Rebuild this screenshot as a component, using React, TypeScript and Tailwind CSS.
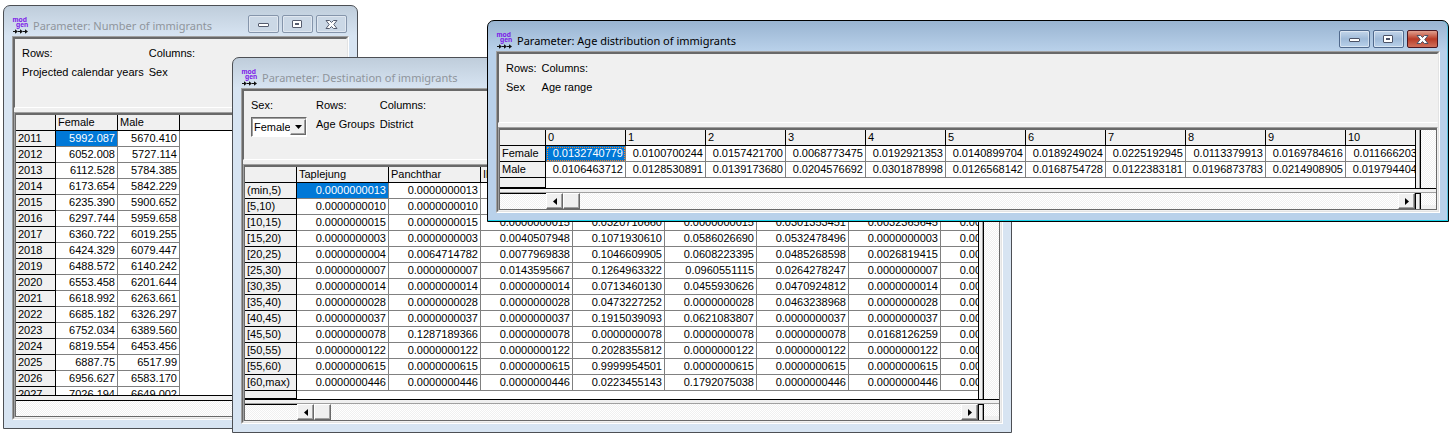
import React from "react";
import clsx from "clsx";

const DITHER =
  "bg-[repeating-conic-gradient(#ffffff_0_25%,#f0f0f0_0_50%)] bg-[length:2px_2px]";

type GridData = {
  label: string;
  columns: string[];
  rows: { name: string; values: string[] }[];
  headWidth: string;
  colWidth: string;
  tableWidth: string;
  focused?: boolean;
};

const immigrants: GridData = {
  label: "Number of immigrants",
  columns: ["Female", "Male"],
  headWidth: "w-[40px]",
  colWidth: "w-[62px]",
  tableWidth: "w-full",
  rows: [
    { name: "2011", values: ["5992.087", "5670.410"] },
    { name: "2012", values: ["6052.008", "5727.114"] },
    { name: "2013", values: ["6112.528", "5784.385"] },
    { name: "2014", values: ["6173.654", "5842.229"] },
    { name: "2015", values: ["6235.390", "5900.652"] },
    { name: "2016", values: ["6297.744", "5959.658"] },
    { name: "2017", values: ["6360.722", "6019.255"] },
    { name: "2018", values: ["6424.329", "6079.447"] },
    { name: "2019", values: ["6488.572", "6140.242"] },
    { name: "2020", values: ["6553.458", "6201.644"] },
    { name: "2021", values: ["6618.992", "6263.661"] },
    { name: "2022", values: ["6685.182", "6326.297"] },
    { name: "2023", values: ["6752.034", "6389.560"] },
    { name: "2024", values: ["6819.554", "6453.456"] },
    { name: "2025", values: ["6887.75", "6517.99"] },
    { name: "2026", values: ["6956.627", "6583.170"] },
    { name: "2027", values: ["7026.194", "6649.002"] },
  ],
};

const destination: GridData = {
  label: "Destination of immigrants",
  columns: ["Taplejung", "Panchthar", "Ilam", "Jhapa", "Morang", "Sunsari", "Dhankuta", "Terhathum"],
  headWidth: "w-[52px]",
  colWidth: "w-[92px]",
  tableWidth: "w-[788px]",
  rows: [
    { name: "(min,5)", values: ["0.0000000013", "0.0000000013", "0.0000000013", "0.0000000013", "0.0000000013", "0.0000000013", "0.0000000013", "0.0000000013"] },
    { name: "[5,10)", values: ["0.0000000010", "0.0000000010", "0.0000000010", "0.0000000010", "0.0000000010", "0.0000000010", "0.0000000010", "0.0000000010"] },
    { name: "[10,15)", values: ["0.0000000015", "0.0000000015", "0.0000000015", "0.0320710660", "0.0000000015", "0.0301353451", "0.0032365645", "0.0000000015"] },
    { name: "[15,20)", values: ["0.0000000003", "0.0000000003", "0.0040507948", "0.1071930610", "0.0586026690", "0.0532478496", "0.0000000003", "0.0000000003"] },
    { name: "[20,25)", values: ["0.0000000004", "0.0064714782", "0.0077969838", "0.1046609905", "0.0608223395", "0.0485268598", "0.0026819415", "0.0000000004"] },
    { name: "[25,30)", values: ["0.0000000007", "0.0000000007", "0.0143595667", "0.1264963322", "0.0960551115", "0.0264278247", "0.0000000007", "0.0000000007"] },
    { name: "[30,35)", values: ["0.0000000014", "0.0000000014", "0.0000000014", "0.0713460130", "0.0455930626", "0.0470924812", "0.0000000014", "0.0000000014"] },
    { name: "[35,40)", values: ["0.0000000028", "0.0000000028", "0.0000000028", "0.0473227252", "0.0000000028", "0.0463238968", "0.0000000028", "0.0000000028"] },
    { name: "[40,45)", values: ["0.0000000037", "0.0000000037", "0.0000000037", "0.1915039093", "0.0621083807", "0.0000000037", "0.0000000037", "0.0000000037"] },
    { name: "[45,50)", values: ["0.0000000078", "0.1287189366", "0.0000000078", "0.0000000078", "0.0000000078", "0.0000000078", "0.0168126259", "0.0000000078"] },
    { name: "[50,55)", values: ["0.0000000122", "0.0000000122", "0.0000000122", "0.2028355812", "0.0000000122", "0.0000000122", "0.0000000122", "0.0000000122"] },
    { name: "[55,60)", values: ["0.0000000615", "0.0000000615", "0.0000000615", "0.9999954501", "0.0000000615", "0.0000000615", "0.0000000615", "0.0000000615"] },
    { name: "[60,max)", values: ["0.0000000446", "0.0000000446", "0.0000000446", "0.0223455143", "0.1792075038", "0.0000000446", "0.0000000446", "0.0000000446"] },
  ],
};

const ageDistribution: GridData = {
  label: "Age distribution of immigrants",
  columns: ["0", "1", "2", "3", "4", "5", "6", "7", "8", "9", "10"],
  headWidth: "w-[46px]",
  colWidth: "w-[80px]",
  tableWidth: "w-[926px]",
  focused: true,
  rows: [
    { name: "Female", values: ["0.0132740779", "0.0100700244", "0.0157421700", "0.0068773475", "0.0192921353", "0.0140899704", "0.0189249024", "0.0225192945", "0.0113379913", "0.0169784616", "0.0116662031"] },
    { name: "Male", values: ["0.0106463712", "0.0128530891", "0.0139173680", "0.0204576692", "0.0301878998", "0.0126568142", "0.0168754728", "0.0122383181", "0.0196873783", "0.0214908905", "0.0197944041"] },
  ],
};

function ModgenIcon() {
  return (
    <svg width="18" height="18" viewBox="0 0 18 18" aria-hidden="true" className="shrink-0">
      <g fill="#7a12e8" fontFamily="Liberation Sans, sans-serif" fontWeight="700" fontSize="6.800">
        <text x="0.500" y="5">mod</text>
        <text x="4" y="10">gen</text>
      </g>
      <g stroke="#111" fill="#111" strokeWidth="1">
        <path d="M1 14.500h3" />
        <path d="M6 14.500h3" />
        <path d="M11 14.500h3" />
        <path stroke="none" d="M3 12.300l3 2.200-3 2.200zM8 12.300l3 2.200-3 2.200zM13 12.300l3 2.200-3 2.200z" />
      </g>
    </svg>
  );
}

function CaptionButton({ kind, active }: { kind: "Minimize" | "Maximize" | "Close"; active: boolean }) {
  const red = active && kind === "Close";
  const stroke = active ? "#4b5266" : "#555c6e";
  return (
    <button
      type="button"
      aria-label={kind}
      className={clsx(
        "flex h-[18px] w-[31px] items-center justify-center rounded-[2px] border",
        red
          ? "border-[#4a1620] bg-linear-to-b from-[#e0a090] from-0% via-[#b83a26] via-50% to-[#d0705c]"
          : active
            ? "border-[#50698c] bg-linear-to-b from-[#c4d6ea] via-[#9fbad8] via-50% to-[#b9d1ea] shadow-[inset_0_0_0_1px_rgba(255,255,255,0.45)]"
            : "border-[#8595ab] bg-[#cbd8e6] shadow-[inset_0_0_0_1px_rgba(255,255,255,0.4)]",
      )}
    >
      <svg width="13" height="11" viewBox="0 0 13 11" fill="#fff" stroke={stroke}>
        {kind === "Minimize" && <rect x="1.500" y="4.500" width="10" height="3" rx="0.500" />}
        {kind === "Maximize" && (
          <>
            <rect x="1.500" y="1.500" width="9" height="7" rx="0.500" />
            <rect x="4.500" y="4.500" width="3" height="1" fill="#9fb6d2" />
          </>
        )}
        {kind === "Close" && (
          <path d="M1 1.500h3.500l2 2 2-2H12L8.800 5.500 12 9.500H8.500l-2-2-2 2H1l3.200-4z" />
        )}
      </svg>
    </button>
  );
}

function Window({
  title,
  className,
  active = false,
  panel,
  children,
}: {
  title: string;
  className: string;
  active?: boolean;
  panel: React.ReactNode;
  children: React.ReactNode;
}) {
  return (
    <section
      aria-label={title}
      className={clsx(
        "absolute flex flex-col rounded-t-[7px] border px-2 pb-2",
        active
          ? "border-black bg-[linear-gradient(#99b4d1,#b9d1ea_30px)] shadow-[inset_0_-1px_0_#19d3ea,inset_-1px_0_0_#5cc4e0]"
          : "border-[#4c4f54] bg-[linear-gradient(#bfcddb,#d7e4f2_30px)]",
        className,
      )}
    >
      <header className="flex h-[30px] shrink-0 items-center pt-[9px] pr-[2px]">
        <ModgenIcon />
        <h2
          className={clsx(
            "ml-[3px] flex-1 truncate font-['Noto_Sans','Open_Sans',sans-serif] text-[11px] leading-4",
            active ? "text-black" : "text-[#8f959c]",
          )}
        >
          {title}
        </h2>
        <div className="flex gap-[3px] self-start">
          <CaptionButton kind="Minimize" active={active} />
          <CaptionButton kind="Maximize" active={active} />
          <CaptionButton kind="Close" active={active} />
        </div>
      </header>
      <div className="flex min-h-0 flex-1 flex-col border border-[#a0a0a0] border-r-white border-b-white">
        <div className="flex min-h-0 flex-1 flex-col border border-[#696969] border-r-[#e3e3e3] border-b-[#e3e3e3] bg-[#f0f0f0]">
          <div className="flex h-[70px] shrink-0 items-start border border-t-[#696969] border-r-[#f0f0f0] border-b-white border-l-[#696969] pt-[5px] pl-[7px]">
            {panel}
          </div>
          <div className="mt-1 flex min-h-0 flex-1 flex-col border border-t-[#a0a0a0] border-r-[#f0f0f0] border-b-[#f0f0f0] border-l-[#a0a0a0]">
            <div className="flex min-h-0 flex-1 flex-col border border-t-2 border-[#696969]">{children}</div>
          </div>
        </div>
      </div>
    </section>
  );
}

function Field({ label, value }: { label: string; value: string }) {
  return (
    <dl className="mr-[5px] leading-[19px]">
      <dt>{label}</dt>
      <dd>{value}</dd>
    </dl>
  );
}

function Grid({ data }: { data: GridData }) {
  const filler = data.tableWidth === "w-full";
  return (
    <div className="flex min-h-0 min-w-0 flex-1 flex-col overflow-hidden border-b border-black bg-white">
      <table
        aria-label={data.label}
        className={clsx("shrink-0 table-fixed border-separate border-spacing-0 leading-[15px]", data.tableWidth)}
      >
        <colgroup>
          <col className={data.headWidth} />
          {data.columns.map((c) => (
            <col key={c} className={data.colWidth} />
          ))}
          {filler && <col />}
        </colgroup>
        <thead>
          <tr className="bg-[#f0f0f0] text-left">
            <td className="h-4 border-r border-b border-black p-0" />
            {data.columns.map((c) => (
              <th key={c} scope="col" className="h-4 overflow-hidden border-r border-b border-black p-0 pl-[2px] font-normal">
                {c}
              </th>
            ))}
            {filler && <td className="h-4 border-b border-black p-0" />}
          </tr>
        </thead>
        <tbody>
          {data.rows.map((row, r) => (
            <tr key={row.name}>
              <th scope="row" className="h-4 border-r border-b border-black bg-[#f0f0f0] p-0 pl-[2px] text-left font-normal">
                {row.name}
              </th>
              {row.values.map((v, c) => (
                <td
                  key={c}
                  className={clsx(
                    "h-4 border-r border-b border-[#808080] p-0 pr-[2px] text-right",
                    r === 0 && c === 0 && "bg-[#0078d7] text-white",
                    r === 0 && c === 0 && data.focused && "outline-1 -outline-offset-2 outline-dotted outline-[#ff8728]",
                  )}
                >
                  {v}
                </td>
              ))}
              {filler && <td className="p-0" />}
            </tr>
          ))}
        </tbody>
      </table>
      <div className={clsx("min-h-0 flex-1 border-r border-b border-black bg-[#f0f0f0]", data.headWidth)} />
    </div>
  );
}

function ScrollButton({ direction }: { direction?: "left" | "right" }) {
  return (
    <button
      type="button"
      aria-label={direction ? `Scroll ${direction}` : "Scroll position"}
      className="flex h-4 w-[17px] shrink-0 items-center justify-center border border-t-white border-r-[#696969] border-b-[#696969] border-l-white bg-[#f0f0f0] shadow-[inset_-1px_-1px_0_#a0a0a0]"
    >
      {direction && (
        <svg width="4" height="7" viewBox="0 0 4 7" fill="#000">
          <path d={direction === "left" ? "M4 0v7L0 3.500z" : "M0 0v7l4-3.500z"} />
        </svg>
      )}
    </button>
  );
}

function Splitter({ className }: { className?: string }) {
  return (
    <div className={clsx("w-[6px] shrink-0 border-x border-black bg-[#f0f0f0] shadow-[inset_-1px_0_0_#a0a0a0]", className)} />
  );
}

function ScrollGrid({ data }: { data: GridData }) {
  return (
    <>
      <div className="flex min-h-0 flex-1">
        <Grid data={data} />
        <Splitter className="border-b" />
        <div className={clsx("w-[15px] shrink-0 border-b border-black", DITHER)} />
      </div>
      <div className="h-1 shrink-0 border-b border-[#a0a0a0] bg-[#f0f0f0]" />
      <div className="flex h-4 shrink-0">
        <div className={clsx("shrink-0 border-t border-black", data.headWidth, DITHER)} />
        <div className={clsx("flex min-w-0 flex-1", DITHER)}>
          <ScrollButton direction="left" />
          <ScrollButton />
          <div className="flex-1" />
          <ScrollButton direction="right" />
        </div>
        <Splitter className="border-t" />
        <div className={clsx("w-[15px] shrink-0 border-b-4 border-[#f0f0f0]", DITHER)} />
      </div>
    </>
  );
}

export default function App() {
  return (
    <main className="relative min-h-screen overflow-hidden bg-white font-['Liberation_Sans',Arial,sans-serif] text-[11px] text-black">
      <Window
        title="Parameter: Number of immigrants"
        className="top-[5px] left-[3px] h-[424px] w-[355px]"
        panel={
          <>
            <Field label="Rows:" value="Projected calendar years" />
            <Field label="Columns:" value="Sex" />
          </>
        }
      >
        <div className="flex min-h-0 flex-1">
          <Grid data={immigrants} />
        </div>
        <div className="h-1 shrink-0 bg-[#f0f0f0]" />
        <div className={clsx("h-4 shrink-0 border-t border-black", DITHER)} />
      </Window>

      <Window
        title="Parameter: Destination of immigrants"
        className="top-[57px] left-[232px] h-[376px] w-[780px]"
        panel={
          <>
            <div className="mr-[9px] flex flex-col">
              <label htmlFor="sex" className="leading-[19px]">
                Sex:
              </label>
              <div className="relative mt-[2px]">
                <select
                  id="sex"
                  defaultValue="Female"
                  className="block h-5 w-[56px] appearance-none border border-t-[#696969] border-r-white border-b-white border-l-[#696969] bg-white pl-[2px] leading-[18px] shadow-[inset_1px_1px_0_#a0a0a0]"
                >
                  <option>Female</option>
                  <option>Male</option>
                </select>
                <span className="pointer-events-none absolute top-[2px] right-[1px] flex h-4 w-4 items-center justify-center border border-t-[#f0f0f0] border-r-[#696969] border-b-[#696969] border-l-[#f0f0f0] bg-[#f0f0f0] shadow-[inset_-1px_-1px_0_#a0a0a0]">
                  <svg width="7" height="4" viewBox="0 0 7 4" aria-hidden="true">
                    <path d="M0 0h7L3.500 4z" />
                  </svg>
                </span>
              </div>
            </div>
            <Field label="Rows:" value="Age Groups" />
            <Field label="Columns:" value="District" />
          </>
        }
      >
        <ScrollGrid data={destination} />
      </Window>

      <Window
        title="Parameter: Age distribution of immigrants"
        className="top-[20px] left-[487px] h-[202px] w-[962px]"
        active
        panel={
          <>
            <Field label="Rows:" value="Sex" />
            <Field label="Columns:" value="Age range" />
          </>
        }
      >
        <ScrollGrid data={ageDistribution} />
      </Window>
    </main>
  );
}
